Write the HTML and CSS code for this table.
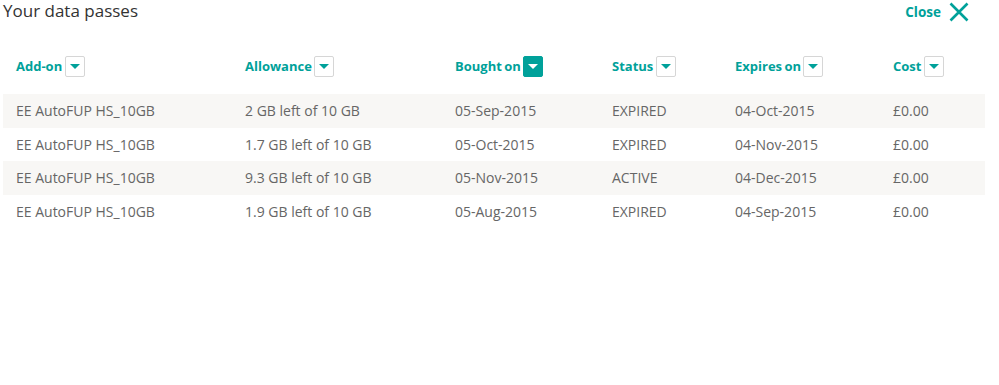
FILE: index.html
```html
<!DOCTYPE html>
<html>
<head>
<meta charset="utf-8">
<link rel="stylesheet" href="styles.css">
</head>
<body>
<div class="panel">
  <div class="topbar">
    <h1 class="title">Your data passes</h1>
    <a class="close">Close
      <svg class="close-x" width="20" height="20" viewBox="0 0 20 20"><path d="M1.5 1.5 L18.5 18.5 M18.5 1.5 L1.5 18.5" stroke="#00a19a" stroke-width="2.6" fill="none"/></svg>
    </a>
  </div>
  <table class="passes">
    <thead>
      <tr>
        <th class="c1">Add-on <span class="sort"><i></i></span></th>
        <th class="c2">Allowance <span class="sort"><i></i></span></th>
        <th class="c3">Bought on <span class="sort active"><i></i></span></th>
        <th class="c4">Status <span class="sort"><i></i></span></th>
        <th class="c5">Expires on <span class="sort"><i></i></span></th>
        <th class="c6">Cost <span class="sort"><i></i></span></th>
      </tr>
    </thead>
    <tbody>
      <tr><td>EE AutoFUP HS_10GB</td><td>2 GB left of 10 GB</td><td>05-Sep-2015</td><td>EXPIRED</td><td>04-Oct-2015</td><td>£0.00</td></tr>
      <tr><td>EE AutoFUP HS_10GB</td><td>1.7 GB left of 10 GB</td><td>05-Oct-2015</td><td>EXPIRED</td><td>04-Nov-2015</td><td>£0.00</td></tr>
      <tr><td>EE AutoFUP HS_10GB</td><td>9.3 GB left of 10 GB</td><td>05-Nov-2015</td><td>ACTIVE</td><td>04-Dec-2015</td><td>£0.00</td></tr>
      <tr><td>EE AutoFUP HS_10GB</td><td>1.9 GB left of 10 GB</td><td>05-Aug-2015</td><td>EXPIRED</td><td>04-Sep-2015</td><td>£0.00</td></tr>
    </tbody>
  </table>
</div>
</body>
</html>
```
FILE: styles.css
```css
html, body { margin: 0; padding: 0; background: #fff; }
body { font-family: "Open Sans", "Liberation Sans", sans-serif; }
.panel { width: 982px; padding: 0 0 0 3px; }
.topbar { display: flex; justify-content: space-between; align-items: flex-start; height: 40px; }
.title { margin: 0; font-size: 17px; font-weight: 400; color: #333; line-height: 22px; padding-top: 0; }
.close { display: flex; align-items: center; gap: 8px; color: #00a19a; font-weight: 700; font-size: 13.5px; margin-top: 2px; margin-right: 16px; }
.close-x { display: block; }
.passes { width: 982px; border-collapse: collapse; table-layout: fixed; margin-top: 15px; }
.passes th { text-align: left; color: #00a19a; font-size: 13px; font-weight: 700; padding: 2px 0 0 13px; height: 37px; vertical-align: top; white-space: nowrap; word-spacing: -1px; }
.sort { display: inline-flex; width: 18px; height: 19px; border: 1px solid #d6d6d6; border-radius: 2px; align-items: center; justify-content: center; vertical-align: middle; box-sizing: content-box; position: relative; top: -1px; word-spacing: 0; }
.sort i { width: 0; height: 0; border-left: 5px solid transparent; border-right: 5px solid transparent; border-top: 5px solid #00a19a; }
.sort.active { background: #00a19a; border-color: #00a19a; }
.sort.active i { border-top-color: #fff; }
.c1 { width: 216px; }
.c2 { width: 197px; }
.c3 { width: 144px; }
.c4 { width: 110px; }
.c5 { width: 145px; }
.passes td { color: #666; font-size: 14px; padding: 0 0 0 13px; height: 33.5px; vertical-align: middle; white-space: nowrap; }
.passes tbody tr:nth-child(odd) td { background: #f8f7f5; }
```
